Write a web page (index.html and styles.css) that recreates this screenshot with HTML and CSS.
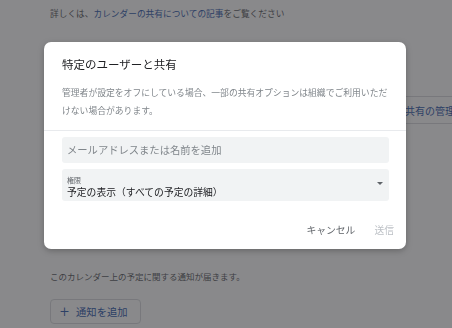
FILE: index.html
```html
<!DOCTYPE html>
<html lang="ja">
<head>
    <meta charset="UTF-8">
    <meta name="viewport" content="width=device-width, initial-scale=1.0">
    <title>カレンダーの共有</title>
    <link rel="stylesheet" href="styles.css">
</head>
<body>

<div id="page">
    <p class="info">詳しくは、<a href="#" class="link">カレンダーの共有についての記事</a>をご覧ください</p>

    <div class="share-row">
        <button type="button" class="outline-btn">共有の管理</button>
    </div>

    <p class="notify-text">このカレンダー上の予定に関する通知が届きます。</p>

    <button type="button" class="outline-btn add-btn"><span class="plus">+</span>通知を追加</button>
</div>

<!-- ダイアログ -->
<div class="scrim">
    <div class="dialog">
        <div class="dialog-head">
            <h2 class="dialog-title">特定のユーザーと共有</h2>
            <p class="dialog-desc">管理者が設定をオフにしている場合、一部の共有オプションは組織でご利用いただけない場合があります。</p>
        </div>

        <div class="dialog-body">
            <input type="text" class="field-input" placeholder="メールアドレスまたは名前を追加">
            <div class="field-select">
                <div class="select-text">
                    <span class="select-label">権限</span>
                    <span class="select-value">予定の表示（すべての予定の詳細）</span>
                </div>
                <span class="arrow"></span>
            </div>
        </div>

        <div class="dialog-foot">
            <button type="button" class="text-btn">キャンセル</button>
            <button type="button" class="text-btn" disabled>送信</button>
        </div>
    </div>
</div>

</body>
</html>
```

FILE: styles.css
```css
html, body {
    margin: 0;
    overflow: hidden;
}

body {
    font-family: Roboto, "Noto Sans CJK JP", sans-serif;
    background: #fff;
    color: #3c4043;
    height: 328px;
}

#page {
    padding: 5px 0 0 50px;
}

.info {
    margin: 0;
    font-size: 8.7px;
    line-height: 18px;
    color: #5f6368;
}

.link {
    color: #3b64b0;
    text-decoration: none;
}

.share-row {
    display: flex;
    justify-content: flex-end;
    margin: 73px -16px 0 0;
}

.outline-btn {
    font-family: inherit;
    background: #fff;
    border: 1px solid #dadce0;
    border-radius: 4px;
    color: #3b64b0;
    font-size: 10px;
    height: 28px;
    padding: 0 12px;
}

.notify-text {
    margin: 144px 0 0;
    font-size: 8.5px;
    line-height: 18px;
    color: #5f6368;
}

.add-btn {
    display: flex;
    align-items: center;
    margin-top: 13px;
    height: 25px;
    width: 91px;
    padding: 0 0 0 9px;
    font-size: 10.3px;
}

.plus {
    font-size: 16px;
    font-weight: 300;
    margin-right: 7px;
    line-height: 1;
}

/* overlay */
.scrim {
    position: fixed;
    inset: 0;
    background: rgba(32, 33, 36, 0.53);
    display: flex;
    justify-content: center;
    align-items: flex-start;
    padding-top: 42px;
}

.dialog {
    width: 362px;
    background: #fff;
    border-radius: 7px;
    box-shadow: 0 2px 6px rgba(0, 0, 0, 0.25);
    margin-left: -2px;
}

.dialog-head {
    padding: 15px 17px 10px 18px;
    border-bottom: 1px solid #e8eaed;
}

.dialog-title {
    margin: 0;
    font-size: 11.5px;
    font-weight: 400;
    line-height: 16px;
    color: #202124;
}

.dialog-desc {
    margin: 11px 0 0;
    font-size: 8.8px;
    line-height: 18px;
    color: #80868b;
}

.dialog-body {
    display: flex;
    flex-direction: column;
    gap: 6px;
    padding: 6px 17px 0 18px;
}

.field-input {
    font-family: inherit;
    height: 26px;
    box-sizing: border-box;
    border: none;
    border-radius: 3px;
    background: #f1f3f4;
    padding: 0 5px;
    font-size: 10.3px;
    color: #202124;
    outline: none;
}

.field-input::placeholder {
    color: #80868b;
}

.field-select {
    display: flex;
    align-items: center;
    justify-content: space-between;
    height: 32px;
    border-radius: 3px;
    background: #f1f3f4;
    padding: 0 6px 0 5px;
}

.select-text {
    display: flex;
    flex-direction: column;
    padding-top: 5px;
}

.select-label {
    font-size: 7px;
    line-height: 10px;
    color: #5f6368;
}

.select-value {
    font-size: 9.8px;
    line-height: 13px;
    color: #202124;
}

.arrow {
    width: 0;
    height: 0;
    border-left: 3px solid transparent;
    border-right: 3px solid transparent;
    border-top: 3px solid #5f6368;
    margin-bottom: 3px;
}

.dialog-foot {
    display: flex;
    justify-content: flex-end;
    gap: 3px;
    padding: 17px 4px 7px 0;
}

.text-btn {
    font-family: inherit;
    background: none;
    border: none;
    height: 24px;
    padding: 0 8px;
    font-size: 9.8px;
    color: #5f6368;
}

.text-btn:disabled {
    color: #bdc1c6;
}
```
